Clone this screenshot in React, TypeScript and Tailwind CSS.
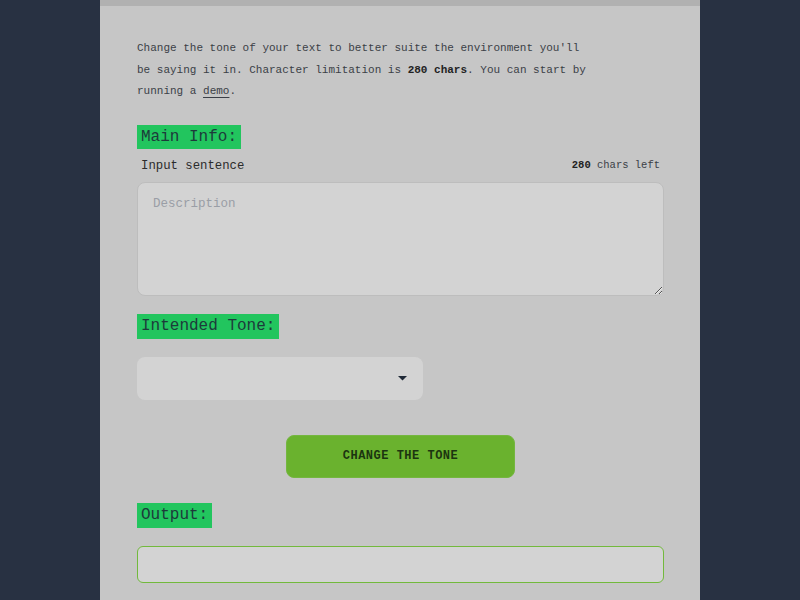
export default function App() {
  return (
    <div className="min-h-screen bg-[#283142] flex justify-center font-['Liberation_Mono','DejaVu_Sans_Mono',monospace]">
      <div className="w-[600px] bg-[#c6c6c6] min-h-screen flex flex-col">
        <div className="h-[6px] bg-[#b1b1b1]" />

        <main className="pl-[37px] pr-[36px] pt-[32px] pb-10 flex flex-col">
          <p className="max-w-[452px] text-[11px] leading-[21.5px] text-[#3b3f47]">
            Change the tone of your text to better suite the environment you&apos;ll be saying it in. Character limitation is{" "}
            <span className="font-bold text-[#222]">280 chars</span>. You can start by running a{" "}
            <span className="underline underline-offset-[3px] decoration-[#3b3f47]">demo</span>.
          </p>

          {/* Main info */}
          <div className="mt-[22px]">
            <h2 className="inline-block bg-[#22c55e] text-[#1d3b3b] text-[16px] leading-[24px] px-1">Main Info:</h2>
          </div>
          <div className="mt-[8px] flex justify-between items-center pl-1 pr-1">
            <span className="text-[12.3px] text-[#2b2b2b]">Input sentence</span>
            <span className="text-[10.5px] text-[#3b3f47]">
              <span className="font-bold text-[#222]">280</span> chars left
            </span>
          </div>
          <textarea
            placeholder="Description"
            className="mt-[7px] h-[114px] w-full rounded-lg bg-[#d3d3d3] border border-[#bdbdbd] px-[15px] py-[12px] text-[12.5px] placeholder:text-[#9a9ea6] outline-none"
          />

          {/* Intended tone */}
          <div className="mt-[18px]">
            <h2 className="inline-block bg-[#22c55e] text-[#1d3b3b] text-[16px] leading-[25px] px-1">Intended Tone:</h2>
          </div>
          <div className="mt-[18px] w-[286px] h-[43px] rounded-lg bg-[#d3d3d3] flex items-center justify-end pr-[16px]">
            <svg width="9" height="6" viewBox="0 0 9 6">
              <path d="M0 1h9L4.5 5.5z" fill="#1f2937" />
            </svg>
          </div>

          <div className="mt-[35px] flex justify-center">
            <button className="w-[229px] h-[43px] rounded-lg bg-[#6ab22e] border border-[#74b63f] text-[#1c3510] text-[12px] font-bold tracking-[0.5px]">
              CHANGE THE TONE
            </button>
          </div>

          {/* Output */}
          <div className="mt-[25px]">
            <h2 className="inline-block bg-[#22c55e] text-[#1d3b3b] text-[16px] leading-[25px] px-1">Output:</h2>
          </div>
          <input className="mt-[18px] w-full h-[37px] rounded-md bg-[#d3d3d3] border border-solid border-[#72b93c] outline-none" />
        </main>
      </div>
    </div>
  );
}
